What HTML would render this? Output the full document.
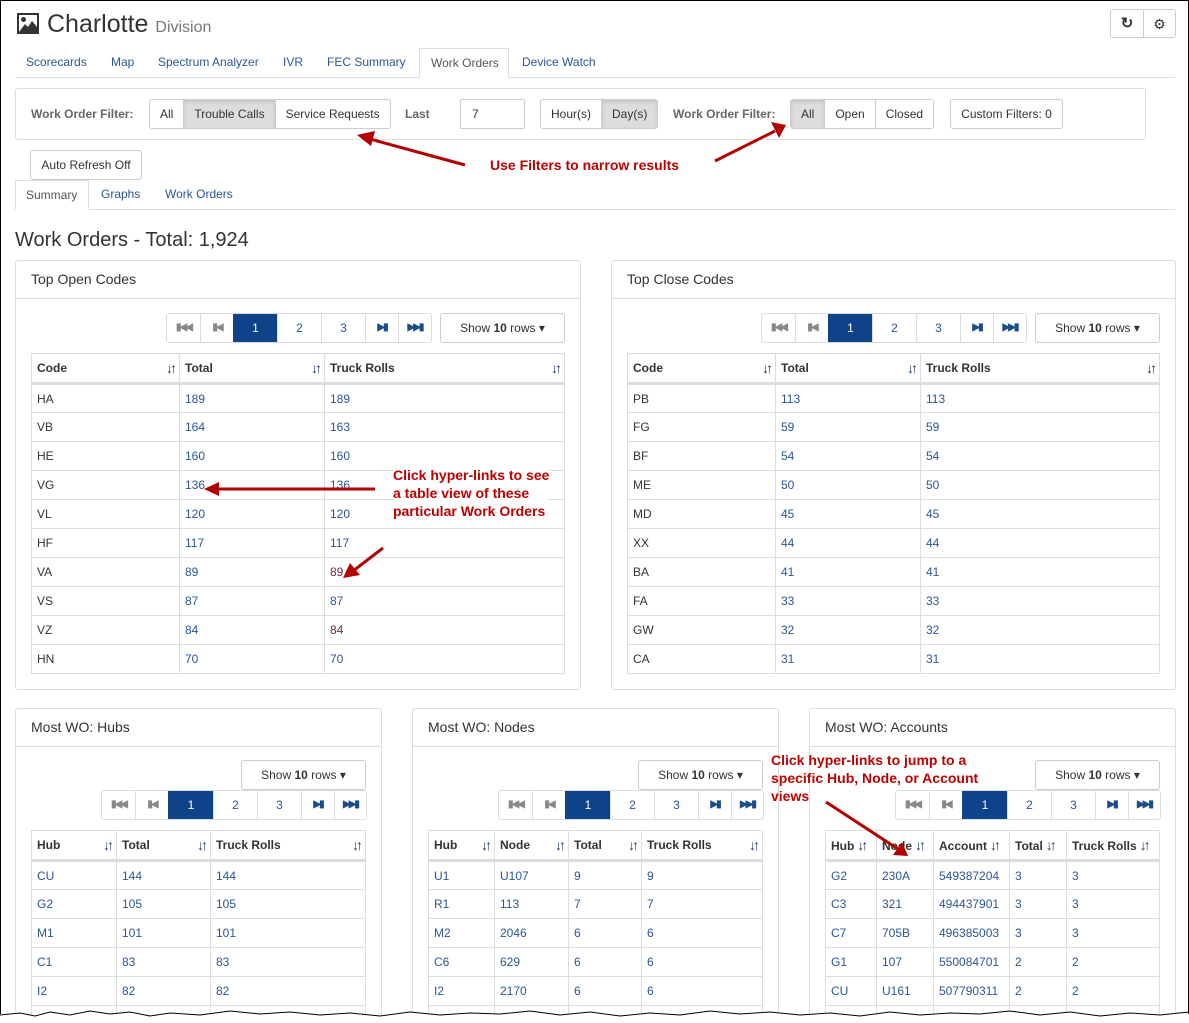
<!DOCTYPE html>
<html style="width:1189px;height:1023px;overflow:hidden"><head><meta charset="utf-8"><style>
*{box-sizing:border-box;margin:0;padding:0}
body{width:1189px;height:1023px;overflow:hidden;background:#fff;font-family:"Liberation Sans",Arial,sans-serif;font-size:12px;color:#333;position:relative}
.a{position:absolute}
.frame{position:absolute;left:0;top:0;width:1189px;height:1023px;border:1px solid #000;border-bottom:none;pointer-events:none}
.tab{position:absolute;top:48px;height:30px;line-height:28px;font-size:12px;color:#2a5699;padding:0 11px;white-space:nowrap}
.tab.act{border:1px solid #ddd;border-bottom-color:#fff;color:#555;background:#fff}
.btn{position:absolute;height:30px;border:1px solid #ccc;border-radius:3px;line-height:28px;text-align:center;font-size:12px;color:#333;background:#fff;white-space:nowrap}
.grp{position:absolute;height:30px;display:flex;border:1px solid #ccc;border-radius:3px;overflow:hidden}
.grp div{line-height:28px;padding:0 10px;border-left:1px solid #ccc;font-size:12px;color:#333;background:#fff;white-space:nowrap}
.grp div:first-child{border-left:none}
.grp div.on{background:#ddd;box-shadow:inset 0 2px 4px rgba(0,0,0,.12)}
.lbl{position:absolute;font-weight:bold;color:#666;font-size:12px}
.panel{position:absolute;border:1px solid #ddd;border-radius:3px;background:#fff}
.ph{height:38px;border-bottom:1px solid #ddd;padding-left:15px;line-height:36px;font-size:14px;color:#333}
.pg{position:absolute;display:flex;height:30px;border:1px solid #ddd;border-radius:3px;overflow:hidden}
.pg div{border-left:1px solid #ddd;text-align:center;line-height:28px;color:#2a5699;font-size:12px}
.pg div:first-child{border-left:none}
.pg .on{background:#0e4289;color:#fff;border-color:#0e4289}
.pg .g{color:#888;font-weight:bold;font-size:10px;letter-spacing:-2px}
.pg .b{color:#1a4c8c;font-weight:bold;font-size:10px;letter-spacing:-2px}
.sr{position:absolute;height:30px;border:1px solid #ccc;border-radius:3px;text-align:center;line-height:28px;font-size:12px}
table{position:absolute;border-collapse:collapse;font-size:12px}
td,th{border:1px solid #ddd;height:29px;padding:0 5px;text-align:left;white-space:nowrap}
th{font-weight:bold;border-bottom:3px solid #ddd;height:30px;position:relative}
th span{position:absolute;right:5px;top:6px;font-size:14px;letter-spacing:-3px;color:#1a3a6a;font-weight:bold}
th span.s{position:static;margin-left:3px}
td{color:#2a5699}
td.d{color:#333}
.ann{position:absolute;color:#c00000;font-weight:bold;font-size:14px;background:#fff;line-height:18px}
</style></head><body>

<svg class="a" style="left:16px;top:12px" width="24" height="23" viewBox="0 0 24 23"><rect x="1" y="1" width="22" height="21" fill="#333"/><rect x="3" y="3" width="18" height="17" fill="#fff"/><circle cx="7.5" cy="7.5" r="2.5" fill="#333"/><path d="M3 20 L9 12 L12 15 L16 9 L21 15 L21 20 Z" fill="#333"/></svg>
<div class="a" style="left:47px;top:10px;font-size:25px;color:#333">Charlotte <span style="font-size:16px;color:#777">Division</span></div>
<div class="grp" style="left:1110px;top:9px;height:29px"><div style="width:32px;padding:0;text-align:center;font-size:15px;font-weight:bold">&#x21BB;</div><div style="width:32px;padding:0;text-align:center;font-size:14px">&#x2699;</div></div>

<div class="a" style="left:15px;top:77px;width:1160px;border-top:1px solid #ddd"></div>
<div class="tab" style="left:15px">Scorecards</div>
<div class="tab" style="left:100px">Map</div>
<div class="tab" style="left:147px">Spectrum Analyzer</div>
<div class="tab" style="left:272px">IVR</div>
<div class="tab" style="left:316px">FEC Summary</div>
<div class="tab act" style="left:419px;width:90px">Work Orders</div>
<div class="tab" style="left:511px">Device Watch</div>

<div class="a" style="left:15px;top:88px;width:1131px;height:52px;border:1px solid #ddd;border-radius:3px"></div>
<div class="lbl" style="left:31px;top:107px">Work Order Filter:</div>
<div class="grp" style="left:149px;top:99px"><div>All</div><div class="on">Trouble Calls</div><div>Service Requests</div></div>
<div class="lbl" style="left:405px;top:107px">Last</div>
<div class="btn" style="left:460px;top:99px;width:65px;text-align:left;padding-left:11px;border-radius:2px">7</div>
<div class="grp" style="left:540px;top:99px"><div>Hour(s)</div><div class="on">Day(s)</div></div>
<div class="lbl" style="left:673px;top:107px">Work Order Filter:</div>
<div class="grp" style="left:790px;top:99px"><div class="on">All</div><div>Open</div><div>Closed</div></div>
<div class="btn" style="left:950px;top:99px;width:113px">Custom Filters: 0</div>
<div class="btn" style="left:30px;top:150px;width:112px">Auto Refresh Off</div>

<div class="a" style="left:15px;top:209px;width:1160px;border-top:1px solid #ddd"></div>
<div class="tab act" style="left:15px;top:180px;width:74px;padding:0 10px">Summary</div>
<div class="tab" style="left:90px;top:180px">Graphs</div>
<div class="tab" style="left:154px;top:180px">Work Orders</div>

<div class="a" style="left:15px;top:229px;font-size:20px;color:#333">Work Orders - Total: 1,924</div>

<div class="panel" style="left:15px;top:260px;width:566px;height:430px"><div class="ph">Top Open Codes</div></div>
<div class="pg" style="left:166px;top:313px"><div class="g" style="width:33px">&#9646;&#9664;&#9664;</div><div class="g" style="width:33px">&#9646;&#9664;</div><div class="on" style="width:44px">1</div><div style="width:44px">2</div><div style="width:44px">3</div><div class="b" style="width:33px">&#9654;&#9646;</div><div class="b" style="width:33px">&#9654;&#9654;&#9646;</div></div>
<div class="sr" style="left:440px;top:313px;width:125px">Show <b>10</b> rows &#9662;</div>
<table style="left:31px;top:353px;width:534px">
<tr><th style="width:148px">Code<span>↓↑</span></th><th style="width:145px">Total<span>↓↑</span></th><th>Truck Rolls<span>↓↑</span></th></tr>
<tr><td class="d">HA</td><td>189</td><td>189</td></tr>
<tr><td class="d">VB</td><td>164</td><td>163</td></tr>
<tr><td class="d">HE</td><td>160</td><td>160</td></tr>
<tr><td class="d">VG</td><td>136</td><td>136</td></tr>
<tr><td class="d">VL</td><td>120</td><td>120</td></tr>
<tr><td class="d">HF</td><td>117</td><td>117</td></tr>
<tr><td class="d">VA</td><td>89</td><td style="color:#6b2a4a">89</td></tr>
<tr><td class="d">VS</td><td>87</td><td>87</td></tr>
<tr><td class="d">VZ</td><td>84</td><td style="color:#6b2a4a">84</td></tr>
<tr><td class="d">HN</td><td>70</td><td>70</td></tr>
</table>

<div class="panel" style="left:611px;top:260px;width:565px;height:430px"><div class="ph">Top Close Codes</div></div>
<div class="pg" style="left:761px;top:313px"><div class="g" style="width:33px">&#9646;&#9664;&#9664;</div><div class="g" style="width:33px">&#9646;&#9664;</div><div class="on" style="width:44px">1</div><div style="width:44px">2</div><div style="width:44px">3</div><div class="b" style="width:33px">&#9654;&#9646;</div><div class="b" style="width:33px">&#9654;&#9654;&#9646;</div></div>
<div class="sr" style="left:1035px;top:313px;width:125px">Show <b>10</b> rows &#9662;</div>
<table style="left:627px;top:353px;width:533px">
<tr><th style="width:148px">Code<span>↓↑</span></th><th style="width:145px">Total<span>↓↑</span></th><th>Truck Rolls<span>↓↑</span></th></tr>
<tr><td class="d">PB</td><td>113</td><td>113</td></tr>
<tr><td class="d">FG</td><td>59</td><td>59</td></tr>
<tr><td class="d">BF</td><td>54</td><td>54</td></tr>
<tr><td class="d">ME</td><td>50</td><td>50</td></tr>
<tr><td class="d">MD</td><td>45</td><td>45</td></tr>
<tr><td class="d">XX</td><td>44</td><td>44</td></tr>
<tr><td class="d">BA</td><td>41</td><td>41</td></tr>
<tr><td class="d">FA</td><td>33</td><td>33</td></tr>
<tr><td class="d">GW</td><td>32</td><td>32</td></tr>
<tr><td class="d">CA</td><td>31</td><td>31</td></tr>
</table>

<div class="panel" style="left:15px;top:708px;width:367px;height:320px"><div class="ph">Most WO: Hubs</div></div>
<div class="sr" style="left:241px;top:760px;width:125px">Show <b>10</b> rows &#9662;</div>
<div class="pg" style="left:101px;top:790px"><div class="g" style="width:33px">&#9646;&#9664;&#9664;</div><div class="g" style="width:33px">&#9646;&#9664;</div><div class="on" style="width:45px">1</div><div style="width:44px">2</div><div style="width:44px">3</div><div class="b" style="width:33px">&#9654;&#9646;</div><div class="b" style="width:32px">&#9654;&#9654;&#9646;</div></div>
<table style="left:31px;top:830px;width:335px">
<tr><th style="width:85px">Hub<span>↓↑</span></th><th style="width:94px">Total<span>↓↑</span></th><th>Truck Rolls<span>↓↑</span></th></tr>
<tr><td>CU</td><td>144</td><td>144</td></tr>
<tr><td>G2</td><td>105</td><td>105</td></tr>
<tr><td>M1</td><td>101</td><td>101</td></tr>
<tr><td>C1</td><td>83</td><td>83</td></tr>
<tr><td>I2</td><td>82</td><td>82</td></tr>
<tr><td>C6</td><td>78</td><td>78</td></tr>
</table>

<div class="panel" style="left:412px;top:708px;width:367px;height:320px"><div class="ph">Most WO: Nodes</div></div>
<div class="sr" style="left:638px;top:760px;width:125px">Show <b>10</b> rows &#9662;</div>
<div class="pg" style="left:498px;top:790px"><div class="g" style="width:33px">&#9646;&#9664;&#9664;</div><div class="g" style="width:33px">&#9646;&#9664;</div><div class="on" style="width:45px">1</div><div style="width:44px">2</div><div style="width:44px">3</div><div class="b" style="width:33px">&#9654;&#9646;</div><div class="b" style="width:32px">&#9654;&#9654;&#9646;</div></div>
<table style="left:428px;top:830px;width:335px">
<tr><th style="width:66px">Hub<span>↓↑</span></th><th style="width:74px">Node<span>↓↑</span></th><th style="width:73px">Total<span>↓↑</span></th><th>Truck Rolls<span>↓↑</span></th></tr>
<tr><td>U1</td><td>U107</td><td>9</td><td>9</td></tr>
<tr><td>R1</td><td>113</td><td>7</td><td>7</td></tr>
<tr><td>M2</td><td>2046</td><td>6</td><td>6</td></tr>
<tr><td>C6</td><td>629</td><td>6</td><td>6</td></tr>
<tr><td>I2</td><td>2170</td><td>6</td><td>6</td></tr>
<tr><td>I2</td><td>2171</td><td>6</td><td>6</td></tr>
</table>

<div class="panel" style="left:809px;top:708px;width:367px;height:320px"><div class="ph">Most WO: Accounts</div></div>
<div class="sr" style="left:1035px;top:760px;width:125px">Show <b>10</b> rows &#9662;</div>
<div class="pg" style="left:895px;top:790px"><div class="g" style="width:33px">&#9646;&#9664;&#9664;</div><div class="g" style="width:33px">&#9646;&#9664;</div><div class="on" style="width:45px">1</div><div style="width:44px">2</div><div style="width:44px">3</div><div class="b" style="width:33px">&#9654;&#9646;</div><div class="b" style="width:32px">&#9654;&#9654;&#9646;</div></div>
<table style="left:825px;top:830px;width:335px">
<tr><th style="width:51px;padding-right:0">Hub<span class="s">↓↑</span></th><th style="width:57px;padding-right:0">Node<span class="s">↓↑</span></th><th style="width:76px;padding-right:0">Account<span class="s">↓↑</span></th><th style="width:57px;padding-right:0">Total<span class="s">↓↑</span></th><th>Truck Rolls<span class="s">↓↑</span></th></tr>
<tr><td>G2</td><td>230A</td><td>549387204</td><td>3</td><td>3</td></tr>
<tr><td>C3</td><td>321</td><td>494437901</td><td>3</td><td>3</td></tr>
<tr><td>C7</td><td>705B</td><td>496385003</td><td>3</td><td>3</td></tr>
<tr><td>G1</td><td>107</td><td>550084701</td><td>2</td><td>2</td></tr>
<tr><td>CU</td><td>U161</td><td>507790311</td><td>2</td><td>2</td></tr>
<tr><td>CS</td><td>207</td><td>500094412</td><td>2</td><td>2</td></tr>
</table>

<div class="ann" style="left:490px;top:156px">Use Filters to narrow results</div>
<div class="ann" style="left:393px;top:466px">Click hyper-links to see<br>a table view of these<br>particular Work Orders</div>
<div class="ann" style="left:771px;top:751px;background:transparent">Click hyper-links to jump to a<br>specific Hub, Node, or Account<br>views</div>
<svg class="a" style="left:0;top:0" width="1189" height="1023">
<g stroke="#b30000" stroke-width="3" fill="#b30000">
<line x1="465" y1="165" x2="370" y2="139"/><polygon points="357,135 375,131 371,146" stroke="none"/>
<line x1="715" y1="161" x2="775" y2="131"/><polygon points="786,125 771,122 779,138" stroke="none"/>
<line x1="375" y1="489" x2="218" y2="489"/><polygon points="204,489 219,482 219,496" stroke="none"/>
<line x1="383" y1="548" x2="353" y2="571"/><polygon points="343,578 350,563 360,575" stroke="none"/>
<line x1="826" y1="802" x2="898" y2="849"/><polygon points="908,856 893,855 902,842" stroke="none"/>
</g>
<path d="M0 1015 L20 1013 L35 1016 L50 1012 L70 1015 L90 1011 L110 1014 L130 1012 L150 1016 L170 1013 L200 1015 L230 1011 L260 1014 L290 1012 L320 1015 L350 1013 L380 1016 L410 1012 L440 1015 L470 1013 L500 1014 L530 1011 L560 1015 L590 1012 L620 1016 L650 1013 L680 1015 L710 1011 L740 1014 L770 1012 L800 1015 L830 1013 L860 1016 L890 1012 L920 1015 L950 1013 L980 1014 L1010 1011 L1040 1015 L1070 1012 L1100 1016 L1130 1013 L1160 1015 L1189 1012 L1189 1023 L0 1023 Z" fill="#fff" stroke="none"/>
<path d="M0 1015 L20 1013 L35 1016 L50 1012 L70 1015 L90 1011 L110 1014 L130 1012 L150 1016 L170 1013 L200 1015 L230 1011 L260 1014 L290 1012 L320 1015 L350 1013 L380 1016 L410 1012 L440 1015 L470 1013 L500 1014 L530 1011 L560 1015 L590 1012 L620 1016 L650 1013 L680 1015 L710 1011 L740 1014 L770 1012 L800 1015 L830 1013 L860 1016 L890 1012 L920 1015 L950 1013 L980 1014 L1010 1011 L1040 1015 L1070 1012 L1100 1016 L1130 1013 L1160 1015 L1189 1012" stroke="#000" stroke-width="1" fill="none"/>
</svg>
<div class="frame" style="height:1014px"></div>
</body></html>
